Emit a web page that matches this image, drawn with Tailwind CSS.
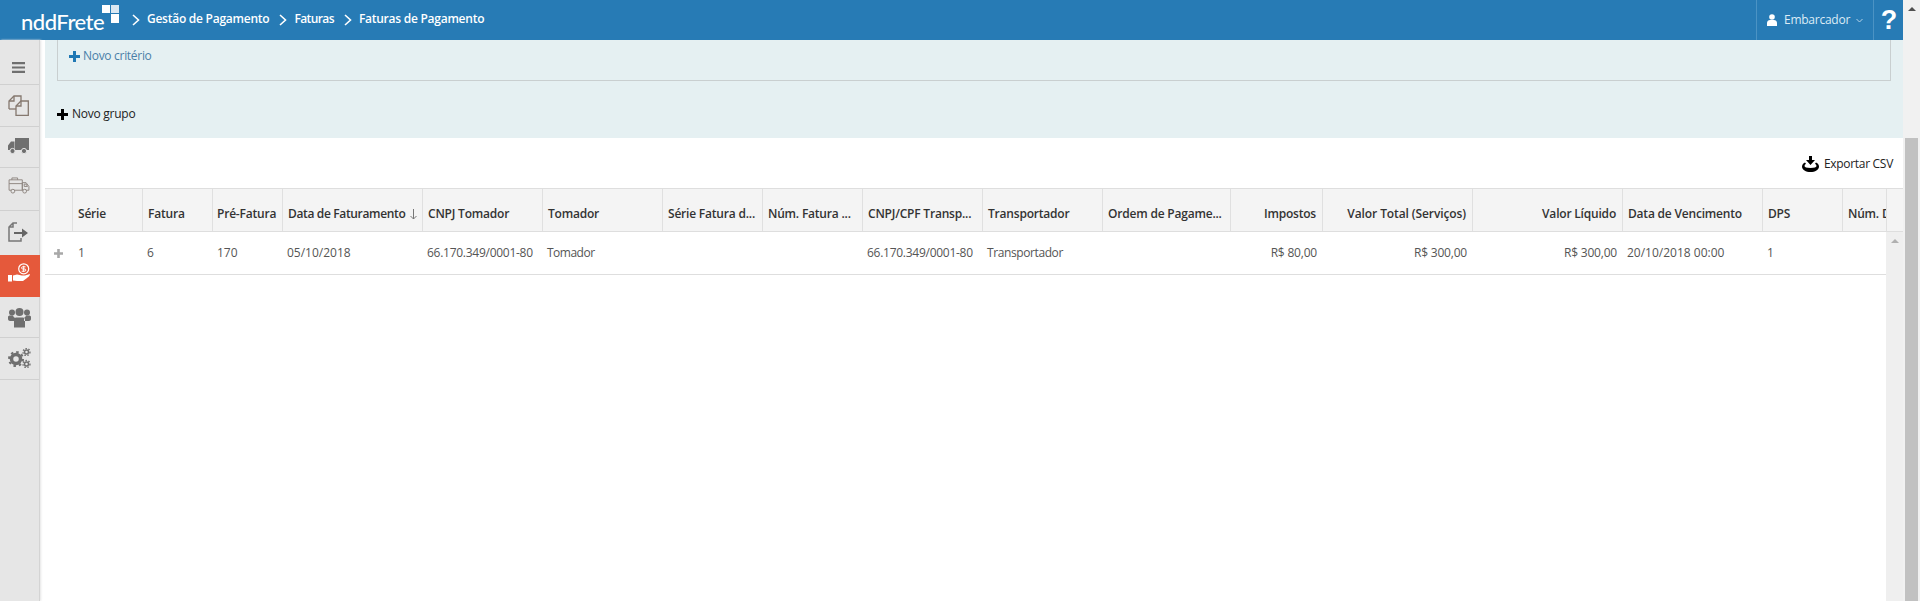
<!DOCTYPE html>
<html lang="pt-BR">
<head>
    <meta charset="UTF-8">
    <title>nddFrete - Faturas de Pagamento</title>
    <script src="https://cdn.jsdelivr.net/npm/@tailwindcss/browser@4"></script>
</head>
<body class="h-screen overflow-hidden bg-white font-['Open_Sans',sans-serif] text-[12px] text-[#555]">
<div class="flex h-[601px]">
    <div class="flex flex-col w-[1903px]">
        <!-- top bar -->
        <header class="flex items-center h-[40px] shrink-0 bg-[#277bb5] text-white">
            <div class="relative w-[124px] h-full shrink-0">
                <span class="absolute left-[21px] top-[6px] font-['Lato',sans-serif] font-medium text-[22px] leading-[32px] tracking-[-0.5px]">nddFrete</span>
                <div class="absolute left-[102px] top-[5px] grid grid-cols-[8px_8px] grid-rows-[8px_9px] gap-[1px]">
                    <div class="bg-white"></div>
                    <div class="bg-[#dbe8f2]"></div>
                    <div></div>
                    <div class="bg-white"></div>
                </div>
            </div>
            <nav class="flex items-center font-semibold text-[12px] tracking-[-0.25px] mt-[-2px]">
                <svg class="w-[8px] h-[12px] ml-[8px] mr-[7px] mt-[2px]" viewBox="0 0 8 12" fill="none" stroke="#fff" stroke-width="1.6"><path d="M1 1l5.500 5L1 11"/></svg>
                <span>Gestão de Pagamento</span>
                <svg class="w-[8px] h-[12px] ml-[10px] mr-[7px] mt-[2px]" viewBox="0 0 8 12" fill="none" stroke="#fff" stroke-width="1.6"><path d="M1 1l5.500 5L1 11"/></svg>
                <span class="tracking-[-0.6px]">Faturas</span>
                <svg class="w-[8px] h-[12px] ml-[10px] mr-[7px] mt-[2px]" viewBox="0 0 8 12" fill="none" stroke="#fff" stroke-width="1.6"><path d="M1 1l5.500 5L1 11"/></svg>
                <span>Faturas de Pagamento</span>
            </nav>
            <div class="ml-auto flex items-center h-full">
                <div class="flex items-center h-full w-[117px] border-l border-[#4b93c4] pl-[10px] text-[#dcebf5]">
                    <svg class="w-[10px] h-[12px] mr-[7px]" viewBox="0 0 10 12" fill="#fff"><circle cx="5" cy="3" r="2.800"/><path d="M0 12V9c0-2 1.500-3 3-3h4c1.500 0 3 1 3 3v3z"/></svg>
                    <span class="tracking-[-0.25px]">Embarcador</span>
                    <svg class="w-[7px] h-[5px] ml-[6px] mt-[1px]" viewBox="0 0 7 5" fill="none" stroke="#b5d3e8" stroke-width="1"><path d="M0.500 1l3 3 3-3"/></svg>
                </div>
                <div class="flex items-center justify-center h-full w-[30px] border-l border-[#4b93c4] font-['Liberation_Sans',sans-serif] font-bold text-[27px] leading-none pl-[1px]">?</div>
            </div>
        </header>

        <div class="flex flex-1 min-h-0">
            <!-- side menu -->
            <aside class="w-[40px] shrink-0 flex flex-col bg-[#e6e6e6] border-r border-[#d4d4d4] mr-[5px] shadow-[1px_0_2px_#e5e5e5]">
                <div class="flex items-center justify-center h-[45px] pt-[10px] pr-[2px] border-b border-[#d0d0d0]">
                    <svg class="w-[13px] h-[11px]" viewBox="0 0 13 11" fill="#6f6f6f"><path d="M0 0h13v2.200H0zM0 4.400h13v2.200H0zM0 8.800h13V11H0z"/></svg>
                </div>
                <div class="flex items-center justify-center h-[42px] pr-[2px] border-b border-[#d0d0d0]">
                    <svg class="w-[21px] h-[21px]" viewBox="0 0 21 21" fill="none" stroke="#85786f" stroke-width="1.300"><path d="M1 14V6l5-5h7v5"/><path d="M6 1v5H1"/><path d="M1 14h7"/><path d="M8 20.300V11l5-5h7.300v14.300z"/><path d="M13 6v5H8"/></svg>
                </div>
                <div class="flex items-center justify-center h-[41px] pr-[2px] pb-[2px] border-b border-[#d0d0d0]">
                    <svg class="w-[21px] h-[16px]" viewBox="0 0 21 16" fill="#6f6f6f"><path d="M7 0h14v12H7zM0 12V7.500L3 3.500h3.500V12z"/><circle cx="4.500" cy="13" r="2.600" stroke="#e6e6e6"/><circle cx="16" cy="13" r="2.600" stroke="#e6e6e6"/></svg>
                </div>
                <div class="flex items-center justify-center h-[43px] pr-[2px] pb-[8px] border-b border-[#d0d0d0]">
                    <svg class="w-[22px] h-[17px]" viewBox="0 0 23 18" fill="none" stroke="#8d8580" stroke-width="1"><path d="M1 3h14v11H1z"/><path d="M4 3V1h6v2M1 7h14"/><path d="M15 6h4l3 4v4h-7z"/><path d="M17 7.500h2l1.500 2.500H17z"/><circle cx="5" cy="15" r="2" fill="#e6e6e6"/><circle cx="17.500" cy="15" r="2" fill="#e6e6e6"/></svg>
                </div>
                <div class="flex items-center justify-center h-[44px] pr-[2px] pb-[2px]">
                    <svg class="w-[21px] h-[20px]" viewBox="0 0 21 20" fill="none"><path d="M9 1H5L1 5v14h12v-3M1 5h4V1" stroke="#777" stroke-width="1.500"/><path d="M6 10h8V6.500l6 4.500-6 4.500V12H6z" fill="#666"/></svg>
                </div>
                <div class="flex items-center justify-center h-[42px] bg-[#e5593b] -mr-px pr-[2px] pb-[8px]">
                    <svg class="w-[22px] h-[19px]" viewBox="0 0 22 19" fill="none"><circle cx="15.700" cy="5.800" r="5" stroke="#fff" stroke-width="1.200"/><path d="M17.500 3.800h-2.800a1 1 0 0 0 0 2.200h2a1 1 0 0 1 0 2.200h-3M15.700 2.800v6" stroke="#fff" stroke-width="1"/><path d="M0 12h4v6.500H0zM5 12.500l4-1c2 0 3 1 5 1h3l5-1.500c0 2-2 3-3 4l-4 3H9l-4-.5z" fill="#fff"/></svg>
                </div>
                <div class="flex items-center justify-center h-[41px] pr-[1px] border-b border-[#d0d0d0]">
                    <svg class="w-[23px] h-[21px]" viewBox="0 0 23 20" fill="#6f6f6f"><circle cx="4" cy="5" r="3"/><circle cx="19" cy="5" r="3"/><circle cx="11.500" cy="4.500" r="4"/><path d="M0 9.500c0-1 1-1.500 2-1.500h3c.5 1.500 1.500 2 2 2.500v3H2c-1 0-2-1-2-2zM23 9.500c0-1-1-1.500-2-1.500h-3c-.5 1.500-1.500 2-2 2.500v3h5c1 0 2-1 2-2zM6 12c0-1 1-2 2-2h7c1 0 2 1 2 2v8H6z"/></svg>
                </div>
                <div class="flex items-center justify-center h-[42px] pr-[1px] border-b border-[#d0d0d0]">
                    <svg class="w-[23px] h-[21px]" viewBox="0 0 23 21" fill="none" stroke="#6f6f6f"><circle cx="8" cy="11" r="4.500" stroke-width="3.500"/><circle cx="8" cy="11" r="7" stroke-width="2" stroke-dasharray="2.500 3"/><circle cx="18.500" cy="4" r="2" stroke-width="1.500"/><circle cx="18.500" cy="4" r="3.500" stroke-width="1.300" stroke-dasharray="1.500 1.500"/><circle cx="18.500" cy="16" r="2" stroke-width="1.500"/><circle cx="18.500" cy="16" r="3.500" stroke-width="1.300" stroke-dasharray="1.500 1.500"/></svg>
                </div>
            </aside>

            <main class="flex-1 min-w-0 flex flex-col">
                <!-- filter panel -->
                <section class="h-[98px] shrink-0 bg-[#e5f0f2] px-[12px]">
                    <div class="flex items-center h-[41px] border-x border-b border-[#c9cfd0] pl-[11px] pb-[8px] text-[#4a7fa8] tracking-[-0.3px]">
                        <svg class="w-[11px] h-[11px] mr-[3px]" viewBox="0 0 11 11" fill="#1f78b4"><path d="M4 0h3v4h4v3H7v4H4V7H0V4h4z"/></svg>
                        <span>Novo critério</span>
                    </div>
                    <div class="flex items-center h-[26px] mt-[20px] text-[#222] tracking-[-0.25px]">
                        <svg class="w-[11px] h-[11px] mr-[4px]" viewBox="0 0 11 11" fill="#000"><path d="M4 0h3v4h4v3H7v4H4V7H0V4h4z"/></svg>
                        <span>Novo grupo</span>
                    </div>
                </section>

                <!-- toolbar -->
                <div class="flex items-center justify-end h-[50px] pt-[2px] shrink-0 pr-[10px] text-[#222] tracking-[-0.3px]">
                    <svg class="w-[17px] h-[16px] mr-[5px]" viewBox="0 0 17 16" fill="#000"><path d="M7 0h3v4h3l-4.500 5L4 4h3z"/><path d="M3 6.500C1 7.500 0 9 0 10.500 0 14 4 16 8.500 16S17 14 17 10.500c0-1.500-1-3-3-4l-1 1.300c1 .7 1.500 1.500 1.500 2.200 0 1-2 2-6 2s-6-1-6-2c0-.7.500-1.500 1.500-2.200z"/></svg>
                    <span>Exportar CSV</span>
                </div>

                <!-- grid -->
                <div class="flex-1 min-h-0 flex flex-col">
                    <div class="flex h-[44px] shrink-0 border-y border-[#dedede] bg-[#f4f4f4] font-semibold text-[#333] tracking-[-0.2px]">
                        <div class="grid grid-cols-[28px_70px_70px_70px_140px_120px_120px_100px_100px_120px_120px_128px_92px_150px_150px_140px_80px_43px] w-[1841px] [&>div]:border-r [&>div]:border-[#e0e0e0] [&>div]:px-[5px] [&>div]:pt-[8px] [&>div]:flex [&>div]:items-center [&>div]:overflow-hidden [&>div]:whitespace-nowrap">
                            <div></div>
                            <div>Série</div>
                            <div>Fatura</div>
                            <div class="!px-[4px]">Pré-Fatura</div>
                            <div class="justify-between tracking-[-0.35px]">Data de Faturamento
                                <svg class="w-[7px] h-[11px] shrink-0" viewBox="0 0 7 11" fill="none" stroke="#777"><path d="M3.500 0v10M0.500 7l3 3 3-3"/></svg>
                            </div>
                            <div>CNPJ Tomador</div>
                            <div>Tomador</div>
                            <div>Série Fatura d...</div>
                            <div>Núm. Fatura ...</div>
                            <div>CNPJ/CPF Transp...</div>
                            <div>Transportador</div>
                            <div>Ordem de Pagame...</div>
                            <div class="justify-end !pr-[6px]">Impostos</div>
                            <div class="justify-end !pr-[6px] tracking-[-0.1px]">Valor Total (Serviços)</div>
                            <div class="justify-end !pr-[6px]">Valor Líquido</div>
                            <div>Data de Vencimento</div>
                            <div>DPS</div>
                            <div class="!border-r-0">Núm. D</div>
                        </div>
                        <div class="flex-1 border-l border-[#e0e0e0]"></div>
                    </div>
                    <div class="flex flex-1 min-h-0">
                        <div class="w-[1841px] h-[43px] border-b border-[#dedede] grid grid-cols-[28px_70px_70px_70px_140px_120px_120px_100px_100px_120px_120px_128px_92px_150px_150px_140px_80px_43px] [&>div]:pl-[4px] [&>div]:pr-[6px] [&>div]:flex [&>div]:items-center [&>div]:whitespace-nowrap">
                            <div class="justify-center !pl-[3px] !pr-[5px]">
                                <svg class="w-[9px] h-[9px]" viewBox="0 0 9 9" fill="#a8a8a8"><path d="M3.200 0h2.600v3.200H9v2.600H5.800V9H3.200V5.800H0V3.200h3.200z"/></svg>
                            </div>
                            <div class="!pl-[5px]">1</div>
                            <div>6</div>
                            <div>170</div>
                            <div>05/10/2018</div>
                            <div class="tracking-[-0.27px]">66.170.349/0001-80</div>
                            <div class="tracking-[-0.5px]">Tomador</div>
                            <div></div>
                            <div></div>
                            <div class="tracking-[-0.27px]">66.170.349/0001-80</div>
                            <div class="tracking-[-0.4px]">Transportador</div>
                            <div></div>
                            <div class="justify-end tracking-[-0.2px]">R$ 80,00</div>
                            <div class="justify-end tracking-[-0.2px]">R$ 300,00</div>
                            <div class="justify-end tracking-[-0.2px]">R$ 300,00</div>
                            <div>20/10/2018 00:00</div>
                            <div>1</div>
                            <div></div>
                        </div>
                        <div class="flex-1 bg-[#efefef] flex justify-center pt-[7px]">
                            <div class="w-0 h-0 border-x-[4px] border-x-transparent border-b-[4px] border-b-[#b0b0b0]"></div>
                        </div>
                    </div>
                </div>
            </main>
        </div>
    </div>

    <!-- page scrollbar -->
    <div class="w-[17px] shrink-0 bg-[#f1f1f1] flex flex-col items-center">
        <div class="w-0 h-0 mt-[7px] border-x-[4px] border-x-transparent border-b-[4px] border-b-[#505050]"></div>
        <div class="w-[13px] flex-1 mt-[127px] bg-[#c1c1c1]"></div>
    </div>
</div>
</body>
</html>
